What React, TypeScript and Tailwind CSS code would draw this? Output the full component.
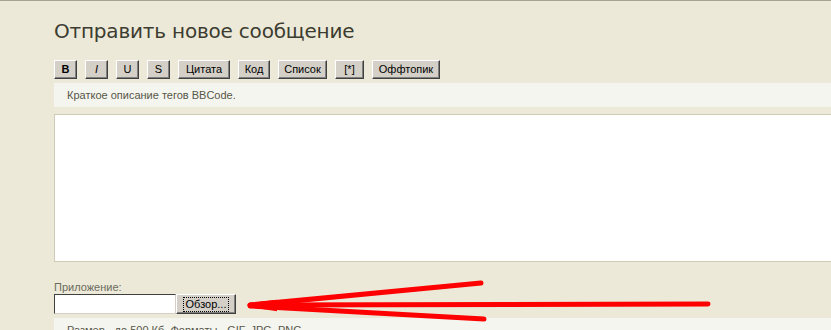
import React from "react";

const tags = [
  { label: "B", w: "w-[23px]", bold: true },
  { label: "I", w: "w-[23px]", italic: true },
  { label: "U", w: "w-[23px]" },
  { label: "S", w: "w-[23px]" },
  { label: "Цитата", w: "w-[52px]" },
  { label: "Код", w: "w-[32px]" },
  { label: "Список", w: "w-[49px]" },
  { label: "[*]", w: "w-[29px]" },
  { label: "Оффтопик", w: "w-[68px]" },
];

function XpButton({ label, w, bold, italic }: { label: string; w: string; bold?: boolean; italic?: boolean }) {
  return (
    <button
      className={`${w} h-[19px] flex items-center justify-center bg-[#d4d0c8] border border-t-white border-l-white border-r-[#404040] border-b-[#404040] shadow-[inset_-1px_-1px_0_#808080] text-[11px] leading-none text-black ${bold ? "font-bold" : ""} ${italic ? "italic" : ""}`}
    >
      {label}
    </button>
  );
}

export default function App() {
  return (
    <div className="relative w-[831px] h-[330px] overflow-hidden bg-[#ece9d8] border-t border-[#a6a392] font-['Liberation_Sans',Arial,sans-serif]">
      <div className="pl-[54px] pt-[17px]">
        <h1 className="text-[20px] leading-[26px] text-[#3c3c30] font-['DejaVu_Sans',sans-serif] font-normal tracking-[-0.2px]">
          Отправить новое сообщение
        </h1>
        <div className="flex mt-[16px] gap-[8px]">
          {tags.map((t) => (
            <XpButton key={t.label} {...t} />
          ))}
        </div>
        <div className="mt-[4px] h-[24px] bg-[#f5f5ef] flex items-center pl-[13px] text-[11px] text-[#555548]">
          Краткое описание тегов BBCode.
        </div>
        <div className="h-[7px]" />
        <div className="h-[148px] bg-white border-t border-l border-b border-[#cfcbb4]" />
        <div className="mt-[19px] text-[11px] leading-[12px] text-[#6b6b60]">Приложение:</div>
        <div className="flex mt-[1px] h-[20px]">
          <div className="w-[122px] h-[20px] bg-white border border-t-[#404040] border-l-[#404040] border-r-[#d4d0c8] border-b-[#d4d0c8]" />
          <button className="w-[60px] h-[20px] bg-[#d4d0c8] border border-t-white border-l-white border-r-[#404040] border-b-[#404040] shadow-[inset_-1px_-1px_0_#808080] flex items-center justify-center">
            <span className="text-[11px] leading-none text-black outline outline-1 outline-dotted outline-black px-[2px] py-[1px]">Обзор...</span>
          </button>
        </div>
        <div className="mt-[4px] h-[24px] bg-[#f5f5ef] pl-[13px] pt-[6px] text-[11px] leading-[12px] text-[#555548]">
          Размер - до 500 Кб. Форматы - GIF, JPG, PNG.
        </div>
      </div>
      <svg className="absolute left-0 top-0 pointer-events-none" width="831" height="330">
        <g stroke="#ff0000" strokeLinecap="round" fill="none">
          <path d="M250 304 L481 282" strokeWidth="5" />
          <path d="M250 304 L708 303" strokeWidth="5" />
          <path d="M250 305 L484 318" strokeWidth="5" />
          <path d="M250 304 L275 301 L275 308 Z" strokeWidth="4" fill="#ff0000" />
        </g>
      </svg>
    </div>
  );
}
